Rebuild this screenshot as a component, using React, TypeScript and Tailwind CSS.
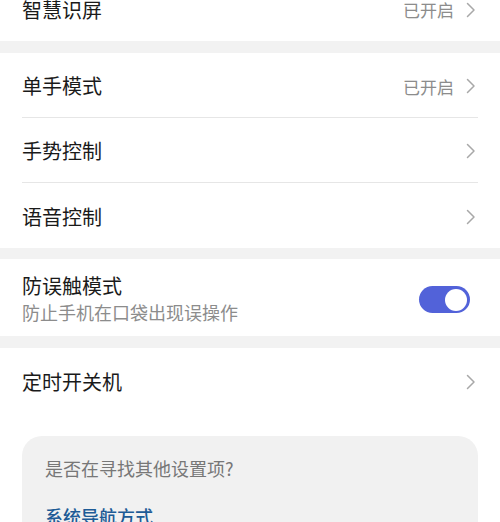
import React from "react";

const font = { fontFamily: '"Noto Sans CJK SC", "Noto Sans", sans-serif' };

function Chevron() {
  return (
    <svg width="10" height="16" viewBox="0 0 10 16" className="shrink-0">
      <path d="M1.5 1.5 L8 8 L1.5 14.5" fill="none" stroke="#a8a8a8" strokeWidth="1.5" strokeLinecap="round" strokeLinejoin="round" />
    </svg>
  );
}

function Row({ label, value, divider }: { label: string; value?: string; divider?: boolean }) {
  return (
    <div className="px-[22px]">
      <div className={`h-[65px] pt-[2px] flex items-center justify-between ${divider ? "border-b border-[#e6e6e6]" : ""}`}>
        <span className="text-[20px] text-[#1a1a1a] leading-none">{label}</span>
        <div className="flex items-center gap-[12px] pr-[2px]">
          {value && <span className="text-[17px] text-[#8c8c8c] leading-none">{value}</span>}
          <Chevron />
        </div>
      </div>
    </div>
  );
}

export default function App() {
  return (
    <div className="w-[500px] h-[522px] overflow-hidden bg-white" style={font}>
      <div className="-mt-[24px] bg-white">
        <Row label="智慧识屏" value="已开启" />
      </div>
      <div className="h-[12px] bg-[#f2f2f2]" />
      <div className="bg-white">
        <Row label="单手模式" value="已开启" divider />
        <Row label="手势控制" divider />
        <Row label="语音控制" />
      </div>
      <div className="h-[11px] bg-[#f2f2f2]" />
      <div className="bg-white h-[77px] px-[22px] flex items-center justify-between">
        <div className="flex flex-col pt-[2px]">
          <span className="text-[20px] text-[#1a1a1a] leading-[26px]">防误触模式</span>
          <span className="text-[18px] text-[#8c8c8c] leading-[26px]">防止手机在口袋出现误操作</span>
        </div>
        <div className="w-[51px] h-[27px] rounded-full bg-[#5262d9] flex items-center justify-end pr-[3px] mr-[8px] mt-[4px]">
          <div className="w-[22px] h-[22px] rounded-full bg-white" />
        </div>
      </div>
      <div className="h-[12px] bg-[#f2f2f2]" />
      <div className="bg-white">
        <Row label="定时开关机" />
      </div>
      <div className="bg-white pt-[23px]">
        <div className="mx-[22px] rounded-[20px] bg-[#f1f1f1] pt-[20px] pb-[20px] px-[23px]">
          <div className="text-[18px] text-[#777777] leading-[24px]">是否在寻找其他设置项?</div>
          <div className="mt-[24px] text-[18px] font-medium text-[#1d5b96] leading-[24px]">系统导航方式</div>
        </div>
      </div>
    </div>
  );
}
